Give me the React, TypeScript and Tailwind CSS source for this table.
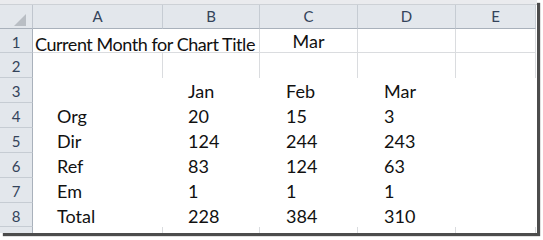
import React from "react";

const W = ["w-[33px]", "w-[130px]", "w-[97px]", "w-[98px]", "w-[98px]", "w-[80px]"];
const H = ["h-[24px]", "h-[25px]", "h-[25px]", "h-[25px]", "h-[25px]", "h-[25px]", "h-[25px]", "h-[24px]"];

const data: string[][] = [
  ["Jan", "Feb", "Mar"],
  ["20", "15", "3"],
  ["124", "244", "243"],
  ["83", "124", "63"],
  ["1", "1", "1"],
  ["228", "384", "310"],
];
const labels = ["", "Org", "Dir", "Ref", "Em", "Total"];
const pads = ["pl-[24px]", "pl-[25px]", "pl-[26px]", "pl-[26px]"];

function RowHead({ n, h }: { n: string; h: string }) {
  return (
    <div
      className={`${W[0]} ${h} shrink-0 bg-[#e3e7ec] border-r border-b border-r-[#a9b1bb] border-b-[#c6ccd3] flex items-center justify-center pt-[3px] text-[15px] text-[#34435a]`}
    >
      {n}
    </div>
  );
}

export default function App() {
  return (
    <div className="w-[543px] h-[240px] bg-white overflow-hidden" style={{ fontFamily: "Lato, 'Liberation Sans', sans-serif" }}>
      <div className="w-[537px] h-[233px] bg-white flex flex-col shadow-[3px_3px_1px_rgba(0,0,0,0.7)]">
        <div className="h-[5px] shrink-0 bg-[#eaebee] border-b border-[#cdd1d6]" />
        {/* column header */}
        <div className="flex h-[24px] shrink-0">
          <div className={`${W[0]} h-full bg-[#e3e7ec] border-r border-b border-r-[#c0c6ce] border-b-[#a9b1bb] relative`}>
            <div className="absolute left-[14px] top-[9px] w-0 h-0 border-l-[12px] border-l-transparent border-b-[12px] border-b-[#b9bec4]" />
          </div>
          {["A", "B", "C", "D", "E"].map((c, i) => (
            <div
              key={c}
              className={`${W[i + 1]} h-full bg-[#e3e7ec] border-r border-b border-r-[#c6ccd3] border-b-[#a9b1bb] flex items-center justify-center text-[15px] text-[#34435a]`}
            >
              {c}
            </div>
          ))}
        </div>
        {/* row 1 */}
        <div className={`flex ${H[0]} shrink-0`}>
          <RowHead n="1" h="h-full" />
          <div className={`${W[1]} h-full border-b border-[#dadcdf] relative`}>
            <span className="absolute left-[2px] top-[2px] whitespace-nowrap text-[18px] tracking-[-0.45px] text-[#111]">Current Month for Chart Title</span>
          </div>
          <div className={`${W[2]} h-full border-r border-b border-[#dadcdf]`} />
          <div className={`${W[3]} h-full border-r border-b border-[#dadcdf] flex items-center justify-center pt-[2px] text-[18px] text-[#111]`}>Mar</div>
          <div className={`${W[4]} h-full border-r border-b border-[#dadcdf]`} />
          <div className={`${W[5]} h-full border-r border-b border-[#dadcdf]`} />
        </div>
        {/* row 2 */}
        <div className={`flex ${H[1]} shrink-0`}>
          <RowHead n="2" h="h-full" />
          {[1, 2, 3, 4, 5].map((i) => (
            <div key={i} className={`${W[i]} h-full border-r border-[#dadcdf]`} />
          ))}
        </div>
        {/* rows 3-8 */}
        {data.map((row, r) => (
          <div key={r} className={`flex ${H[r + 2]} shrink-0`}>
            <RowHead n={String(r + 3)} h="h-full" />
            <div className={`${W[1]} h-full flex items-center pt-[2px] ${pads[0]} text-[18px] text-[#111]`}>{labels[r]}</div>
            {row.map((v, j) => (
              <div key={j} className={`${W[j + 2]} h-full flex items-center pt-[2px] ${pads[j + 1]} text-[18px] text-[#111]`}>
                {v}
              </div>
            ))}
            <div className={`${W[5]} h-full`} />
          </div>
        ))}
        {/* partial row 9 */}
        <div className="flex flex-1">
          <div className={`${W[0]} h-full bg-[#e3e7ec] border-r border-[#a9b1bb]`} />
          {[1, 2, 3, 4, 5].map((i) => (
            <div key={i} className={`${W[i]} h-full border-r border-[#dadcdf]`} />
          ))}
        </div>
      </div>
    </div>
  );
}
